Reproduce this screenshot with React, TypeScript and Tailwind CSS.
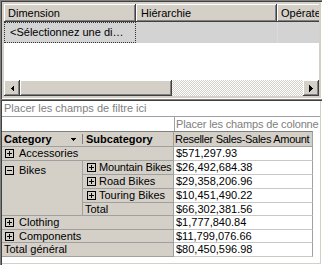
import React from "react";

const raised =
  "shadow-[inset_-1px_-1px_0_#404040,inset_1px_1px_0_#ffffff,inset_-2px_-2px_0_#808080]";

function Expander({ open }: { open?: boolean }) {
  return (
    <svg width="9" height="9" viewBox="0 0 9 9" shapeRendering="crispEdges" className="shrink-0">
      <rect x="0.5" y="0.5" width="8" height="8" fill="none" stroke="#000" />
      <path d="M2 4.5h5" stroke="#000" />
      {!open && <path d="M4.5 2v5" stroke="#000" />}
    </svg>
  );
}

function Arrow({ dir }: { dir: "left" | "right" }) {
  return (
    <svg width="4" height="7" viewBox="0 0 4 7" shapeRendering="crispEdges">
      {dir === "left" ? <path d="M4 0v7L0.5 3.5z" fill="#000" /> : <path d="M0 0v7l3.5-3.5z" fill="#000" />}
    </svg>
  );
}

const rowHead = "bg-[#d4d0c8] border-b border-r border-[#a0a0a0] flex items-center whitespace-nowrap overflow-hidden";
const valCell = "bg-white border-b border-r border-b-[#c8c8c8] border-r-[#a0a0a0] flex items-center pl-[2px] whitespace-nowrap";

export default function App() {
  const values = [
    "$571,297.93",
    "$26,492,684.38",
    "$29,358,206.96",
    "$10,451,490.22",
    "$66,302,381.56",
    "$1,777,840.84",
    "$11,799,076.66",
    "$80,450,596.98",
  ];

  return (
    <div className="w-[322px] h-[265px] overflow-hidden bg-[#d4d0c8] font-['Liberation_Sans',Arial,sans-serif] text-[11px] leading-[13px] text-black">
      {/* Dimension list */}
      <div className="h-[99px] pl-[4px] pt-[4px] pr-[3px] pb-[3px] flex flex-col shadow-[inset_1px_1px_0_#808080,inset_2px_2px_0_#404040,inset_-1px_-1px_0_#ffffff]">
        <div className="flex h-[18px] shrink-0 overflow-hidden">
          <div className={`w-[132px] shrink-0 flex items-center pl-[4px] ${raised}`}>Dimension</div>
          <div className={`w-[141px] shrink-0 flex items-center pl-[5px] ${raised}`}>Hiérarchie</div>
          <div className={`w-[60px] shrink-0 flex items-center pl-[4px] ${raised}`}>Opérateur</div>
        </div>
        <div className="flex h-[21px] shrink-0 bg-[#d3d3d3]">
          <div className="w-[132px] shrink-0 border border-dotted border-[#333] flex items-center pl-[5px] whitespace-nowrap">
            &lt;Sélectionnez une di…
          </div>
          <div className="w-[141px] shrink-0"></div>
          <div className="flex-1 border-l border-[#dadada]"></div>
        </div>
        <div className="flex-1 bg-white"></div>
        <div className="flex h-[16px] shrink-0">
          <div className={`w-[16px] shrink-0 bg-[#d4d0c8] flex items-center justify-center ${raised}`}>
            <Arrow dir="left" />
          </div>
          <div className={`w-[152px] shrink-0 bg-[#d4d0c8] ${raised}`}></div>
          <div className="flex-1 bg-[repeating-conic-gradient(#d4d0c8_0_25%,#ffffff_0_50%)] bg-[length:2px_2px]"></div>
          <div className={`w-[16px] shrink-0 bg-[#d4d0c8] flex items-center justify-center ${raised}`}>
            <Arrow dir="right" />
          </div>
        </div>
      </div>

      {/* Pivot table */}
      <div className="h-[166px] p-[2px] shadow-[inset_1px_1px_0_#808080,inset_2px_2px_0_#404040,inset_-1px_-1px_0_#ffffff,inset_-2px_-2px_0_#d4d0c8]">
        <div className="h-full bg-white flex flex-col">
          <div className="h-[16px] shrink-0 border-b border-[#a0a0a0] flex items-center pl-[2px] text-[#808080] whitespace-nowrap">
            Placer les champs de filtre ici
          </div>
          <div className="h-[14px] shrink-0 flex">
            <div className="w-[172px] shrink-0"></div>
            <div className="flex-1 border-l border-[#a0a0a0] flex items-center pl-[1px] text-[#808080] whitespace-nowrap overflow-hidden tracking-[-0.15px]">
              Placer les champs de colonne ici
            </div>
          </div>
          <div className="grid grid-cols-[81px_91px_139px] grid-rows-[16px_14px_14px_14px_14px_13px_14px_13px_14px]">
            {/* header */}
            <div className="bg-[#d4d0c8] border-t border-b border-[#808080] border-b-[#a0a0a0] flex items-center pl-[2px] font-bold">
              <span>Category</span>
              <svg width="5" height="3" viewBox="0 0 5 3" className="ml-auto mr-[6px] shrink-0" shapeRendering="crispEdges">
                <path d="M0 0h5L2.5 3z" fill="#000" />
              </svg>
              <div className="w-px h-[10px] bg-[#808080]"></div>
            </div>
            <div className="bg-[#d4d0c8] border-t border-b border-r border-[#808080] border-b-[#a0a0a0] border-r-[#a0a0a0] flex items-center pl-[3px] font-bold">
              Subcategory
            </div>
            <div className="bg-[#d4d0c8] border-t border-b border-r border-[#808080] border-b-[#a0a0a0] border-r-[#a0a0a0] flex items-center pl-[1px] whitespace-nowrap overflow-hidden tracking-[-0.3px]">
              Reseller Sales-Sales Amount
            </div>

            {/* Accessories */}
            <div className={`${rowHead} col-span-2 pl-[3px] gap-[5px]`}>
              <Expander />
              Accessories
            </div>
            <div className={valCell}>{values[0]}</div>

            {/* Bikes */}
            <div className={`${rowHead} row-span-4 items-start pl-[3px] pt-[3px]`}>
              <div className="flex items-center gap-[5px]">
                <Expander open />
                Bikes
              </div>
            </div>
            <div className={`${rowHead} pl-[4px] gap-[3px] tracking-[-0.2px]`}>
              <Expander />
              Mountain Bikes
            </div>
            <div className={valCell}>{values[1]}</div>
            <div className={`${rowHead} pl-[4px] gap-[3px]`}>
              <Expander />
              Road Bikes
            </div>
            <div className={valCell}>{values[2]}</div>
            <div className={`${rowHead} pl-[4px] gap-[3px]`}>
              <Expander />
              Touring Bikes
            </div>
            <div className={valCell}>{values[3]}</div>
            <div className={`${rowHead} pl-[2px]`}>Total</div>
            <div className={valCell}>{values[4]}</div>

            {/* Clothing */}
            <div className={`${rowHead} col-span-2 pl-[3px] gap-[5px]`}>
              <Expander />
              Clothing
            </div>
            <div className={valCell}>{values[5]}</div>

            {/* Components */}
            <div className={`${rowHead} col-span-2 pl-[3px] gap-[5px]`}>
              <Expander />
              Components
            </div>
            <div className={valCell}>{values[6]}</div>

            {/* Grand total */}
            <div className={`${rowHead} col-span-2 pl-[2px]`}>Total général</div>
            <div className={valCell}>{values[7]}</div>
          </div>
        </div>
      </div>
    </div>
  );
}
